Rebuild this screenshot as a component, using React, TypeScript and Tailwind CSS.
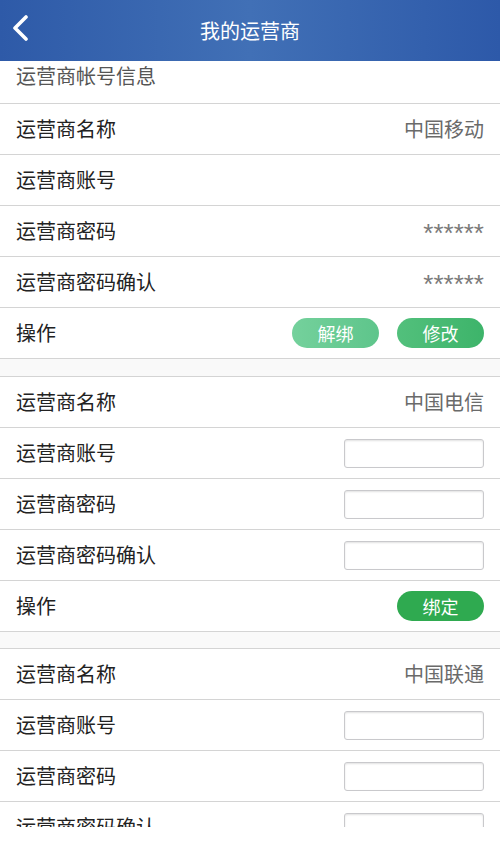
import React from "react";

type Row =
  | { label: string; kind: "text"; value: string }
  | { label: string; kind: "empty" }
  | { label: string; kind: "input" }
  | { label: string; kind: "actions"; buttons: { text: string; className: string }[] };

const FONT = "font-['PingFang_SC','Noto_Sans_CJK_SC','Noto_Sans',sans-serif]";

const bound: Row[] = [
  { label: "运营商名称", kind: "text", value: "中国移动" },
  { label: "运营商账号", kind: "empty" },
  { label: "运营商密码", kind: "text", value: "******" },
  { label: "运营商密码确认", kind: "text", value: "******" },
  {
    label: "操作",
    kind: "actions",
    buttons: [
      { text: "解绑", className: "bg-gradient-to-r from-[#74d19c] to-[#5ec58b]" },
      { text: "修改", className: "bg-gradient-to-r from-[#52c07c] to-[#3db46a]" },
    ],
  },
];

const unbound = (name: string, withActions: boolean): Row[] => {
  const rows: Row[] = [
    { label: "运营商名称", kind: "text", value: name },
    { label: "运营商账号", kind: "input" },
    { label: "运营商密码", kind: "input" },
    { label: "运营商密码确认", kind: "input" },
  ];
  if (withActions)
    rows.push({
      label: "操作",
      kind: "actions",
      buttons: [{ text: "绑定", className: "bg-[#2faa50]" }],
    });
  return rows;
};

function FieldRow({ row }: { row: Row }) {
  return (
    <div className="flex h-[51px] items-center justify-between border-b border-[#d4d4d4] bg-white pl-4 pr-4">
      <span className="text-[20px] text-[#222]">{row.label}</span>
      {row.kind === "text" && (
        <span
          className={
            row.value.startsWith("*")
              ? "pt-[4px] text-[26px] leading-none text-[#7a7a7a] font-['Liberation_Sans',sans-serif]"
              : "text-[20px] text-[#6a6a6a]"
          }
        >
          {row.value}
        </span>
      )}
      {row.kind === "input" && (
        <input className="h-[29px] w-[140px] rounded-[3px] border border-[#c9c9cc] bg-white shadow-[inset_0_1px_2px_rgba(0,0,0,0.12)] outline-none" />
      )}
      {row.kind === "actions" && (
        <div className="flex gap-[18px]">
          {row.buttons.map((b) => (
            <button
              key={b.text}
              className={`h-[30px] w-[87px] rounded-full text-[18px] leading-none text-white ${b.className}`}
            >
              {b.text}
            </button>
          ))}
        </div>
      )}
    </div>
  );
}

export default function App() {
  return (
    <div className={`flex h-[842px] w-[500px] flex-col bg-white ${FONT}`}>
      <header className="relative flex h-[61px] shrink-0 items-center justify-center bg-gradient-to-r from-[#2e5aa8] via-[#4170b6] to-[#2d59a9]">
        <svg
          className="absolute left-[11px] top-[15px]"
          width="20"
          height="26"
          viewBox="0 0 20 26"
          fill="none"
        >
          <path d="M15 2 L4 13 L15 24" stroke="white" strokeWidth="3.6" strokeLinecap="round" strokeLinejoin="round" />
        </svg>
        <h1 className="text-[20px] text-white">我的运营商</h1>
      </header>

      <div className="h-[766px] shrink-0 overflow-hidden bg-[#f9f9f9]">
        <div className="h-[43px] border-b border-[#d4d4d4] bg-white pl-4 pt-[1px]">
          <span className="text-[20px] leading-[28px] text-[#555]">运营商帐号信息</span>
        </div>
        <div>
          {bound.map((r, i) => (
            <FieldRow key={i} row={r} />
          ))}
        </div>
        <div className="mt-[17px] border-t border-[#d4d4d4]">
          {unbound("中国电信", true).map((r, i) => (
            <FieldRow key={i} row={r} />
          ))}
        </div>
        <div className="mt-[16px] border-t border-[#d4d4d4]">
          {unbound("中国联通", false).map((r, i) => (
            <FieldRow key={i} row={r} />
          ))}
        </div>
      </div>
      <div className="flex-1 bg-white" />
    </div>
  );
}
